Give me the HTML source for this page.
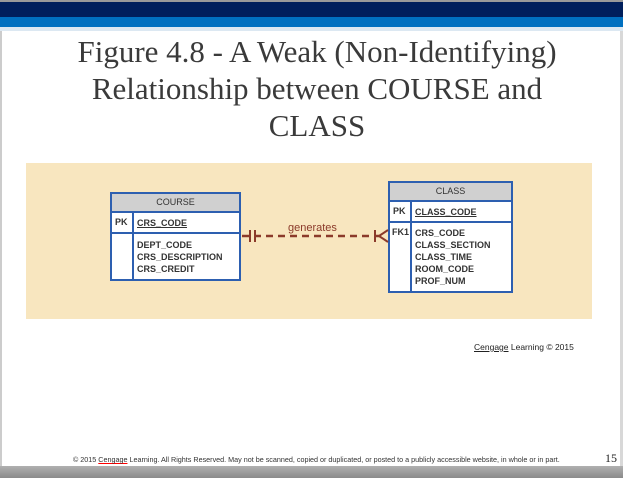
<!DOCTYPE html>
<html><head><style>
body{margin:0;width:623px;height:478px;background:#fff;position:relative;overflow:hidden;font-family:"Liberation Sans",sans-serif}
.a{position:absolute}
.t{font-family:"Liberation Serif",serif;font-size:31px;color:#3a3a3a;text-align:center;line-height:37px;left:62px;width:510px;top:33px}
.box{position:absolute;background:#fff;border:2px solid #2d5fb0;box-sizing:border-box;overflow:hidden}
.hd{background:#d0d0d0;border-bottom:2px solid #2d5fb0;text-align:center;font-size:9px;color:#333;height:17px;line-height:17px}
.r{display:flex;border-bottom:2px solid #2d5fb0;font-size:9px;font-weight:bold;color:#333;box-sizing:border-box}
.r:last-child{border-bottom:none}
.k{width:22px;border-right:2px solid #2d5fb0;padding:4px 0 0 3px;box-sizing:border-box}
.v{padding:4px 0 0 3px;line-height:12px}
u{text-decoration:underline}
</style></head><body>
<div class="a" style="left:0;top:0;width:623px;height:2px;background:#9a9a9a"></div>
<div class="a" style="left:0;top:2px;width:623px;height:15px;background:#001f5c"></div>
<div class="a" style="left:0;top:17px;width:623px;height:10px;background:#0070c0"></div>
<div class="a" style="left:0;top:27px;width:623px;height:4px;background:#dce8f2"></div>
<div class="a" style="left:0;top:31px;width:2px;height:440px;background:#ccc"></div>
<div class="a t">Figure 4.8 - A Weak (Non-Identifying) Relationship between COURSE and CLASS</div>
<div class="a" style="left:26px;top:163px;width:566px;height:156px;background:#f8e6bf"></div>
<div class="box" style="left:110px;top:192px;width:131px;height:89px">
<div class="hd">COURSE</div>
<div class="r" style="height:21px"><div class="k">PK</div><div class="v"><u>CRS_CODE</u></div></div>
<div class="r" style="height:47px"><div class="k"></div><div class="v" style="padding-top:5px">DEPT_CODE<br>CRS_DESCRIPTION<br>CRS_CREDIT</div></div>
</div>
<div class="box" style="left:388px;top:181px;width:125px;height:112px">
<div class="hd">CLASS</div>
<div class="r" style="height:21px"><div class="k">PK</div><div class="v"><u>CLASS_CODE</u></div></div>
<div class="r" style="height:70px"><div class="k" style="padding-left:2px">FK1</div><div class="v">CRS_CODE<br>CLASS_SECTION<br>CLASS_TIME<br>ROOM_CODE<br>PROF_NUM</div></div>
</div>
<svg class="a" style="left:240px;top:225px" width="150" height="20">
<line x1="2" y1="11" x2="145" y2="11" stroke="#8b3a2a" stroke-width="2.5" stroke-dasharray="7,5"/>
<line x1="10" y1="5" x2="10" y2="17" stroke="#8b3a2a" stroke-width="2"/>
<line x1="15" y1="5" x2="15" y2="17" stroke="#8b3a2a" stroke-width="2"/>
<line x1="135" y1="5" x2="135" y2="17" stroke="#8b3a2a" stroke-width="2"/>
<path d="M148 5 L139 11 L148 17" fill="none" stroke="#8b3a2a" stroke-width="2"/>
</svg>
<div class="a" style="left:288px;top:222px;font-size:11px;color:#8b3a2a">generates</div>
<div class="a" style="left:474px;top:342px;font-size:8.5px;color:#222"><u>Cengage</u> Learning © 2015</div>
<div class="a" style="left:73px;top:455px;font-size:7.2px;color:#333;white-space:nowrap">© 2015 <span style="text-decoration:underline red">Cengage</span> Learning. All Rights Reserved. May not be scanned, copied or duplicated, or posted to a publicly accessible website, in whole or in part.</div>
<div class="a" style="left:605px;top:451px;font-family:'Liberation Serif',serif;font-size:12px;color:#222">15</div>
<div class="a" style="left:0;top:466px;width:623px;height:12px;background:linear-gradient(#b0b0b0,#8a8a8a)"></div>
<div class="a" style="left:620px;top:31px;width:3px;height:435px;background:#d8d8d8"></div>
</body></html>
